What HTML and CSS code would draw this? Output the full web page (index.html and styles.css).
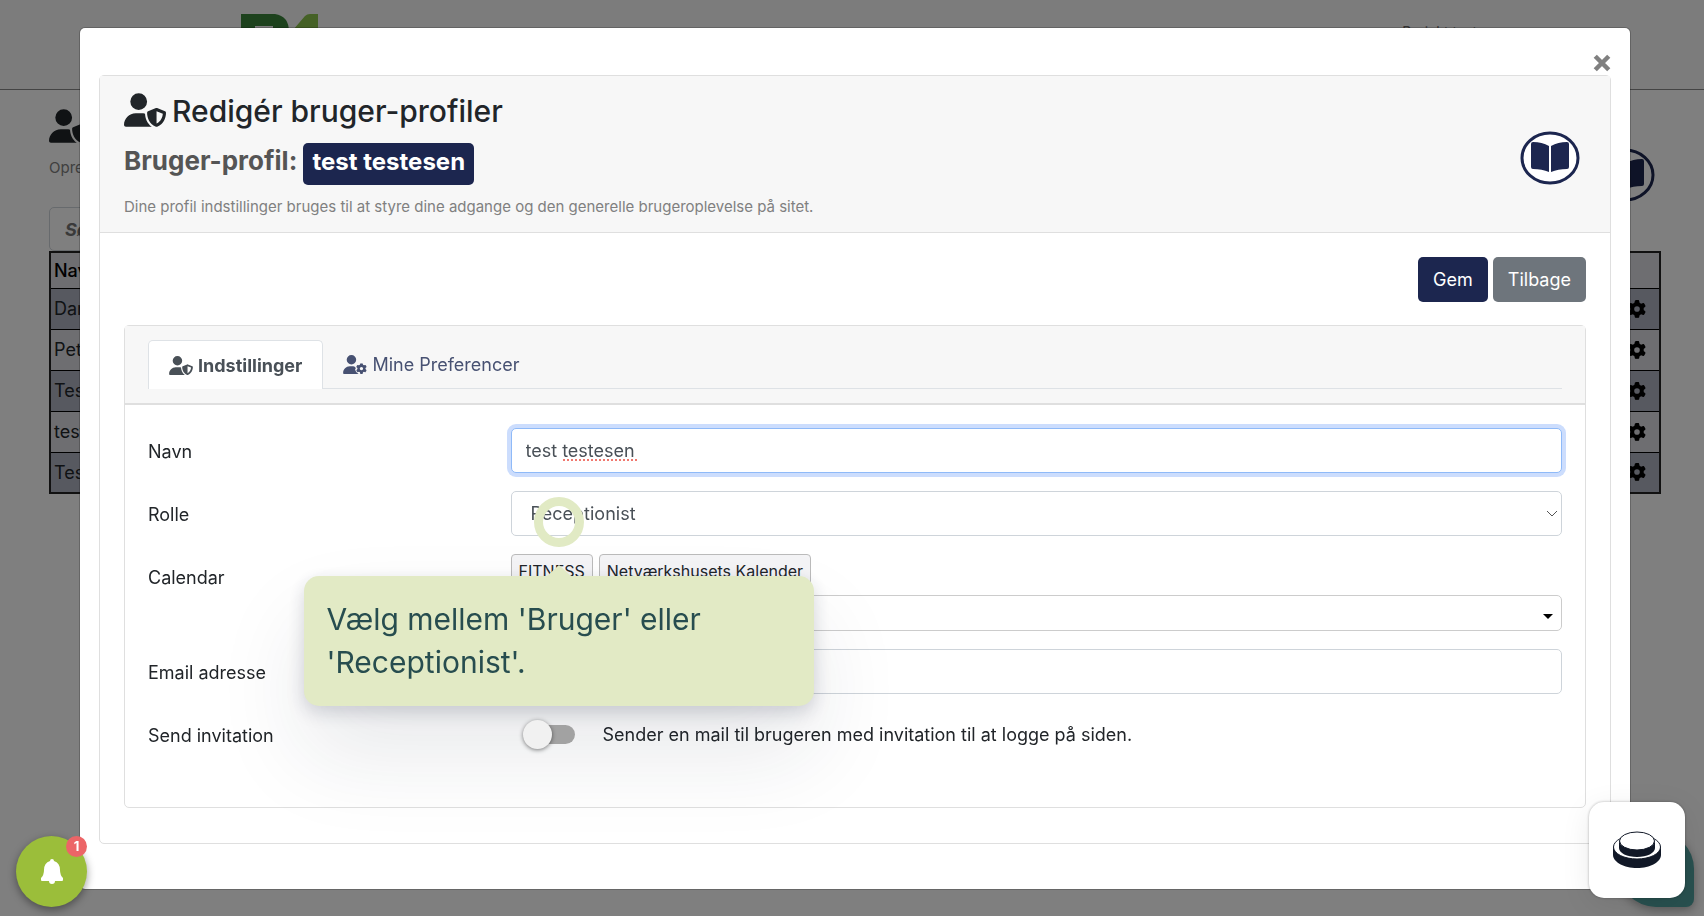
FILE: index.html
```html
<!DOCTYPE html>
<html lang="da">

<head>
    <meta charset="UTF-8">
    <meta name="viewport" content="width=device-width, initial-scale=1.0">
    <title>Redigér bruger-profiler</title>
    <link rel="stylesheet" href="styles.css">
</head>

<body>
    <!-- icons -->
    <svg class="sprite" aria-hidden="true">
        <symbol id="user-shield" viewBox="0 0 640 512">
            <path d="M224 256A128 128 0 1 0 224 0a128 128 0 1 0 0 256zm-45.700 48C79.800 304 0 383.800 0 482.300C0 498.700 13.300 512 29.700 512l388.600 0c1.800 0 3.500-.2 5.300-.5c-76.300-55.100-99.800-141-103.100-200.200c-16.100-4.800-33.100-7.300-50.700-7.300l-91.400 0zm308.800-78.300l-120 48C358 277.400 352 286.200 352 296c0 63.300 25.900 168.800 134.800 214.200c5.900 2.500 12.600 2.500 18.500 0C614.100 464.800 640 359.300 640 296c0-9.800-6-18.600-15.100-22.300l-120-48c-5.700-2.300-12.100-2.300-17.800 0zM591.400 312c-3.900 50.700-27.200 116.700-95.400 149.700l0-187.800L591.400 312z" />
        </symbol>
        <symbol id="gear" viewBox="0 0 512 512">
            <path d="M495.900 166.600c3.200 8.700 .5 18.400-6.400 24.600l-43.300 39.400c1.100 8.300 1.700 16.800 1.700 25.400s-.6 17.100-1.700 25.400l43.300 39.400c6.900 6.200 9.600 15.900 6.400 24.600c-4.400 11.900-9.700 23.300-15.800 34.300l-4.700 8.100c-6.600 11-14 21.400-22.100 31.200c-5.900 7.200-15.700 9.600-24.500 6.800l-55.700-17.700c-13.400 10.300-28.200 18.900-44 25.400l-12.500 57.100c-2 9.100-9 16.300-18.200 17.800c-13.800 2.300-28 3.500-42.500 3.500s-28.700-1.200-42.500-3.500c-9.200-1.500-16.200-8.700-18.200-17.800l-12.500-57.100c-15.800-6.500-30.600-15.100-44-25.400L83.100 425.900c-8.800 2.800-18.600 .3-24.500-6.800c-8.100-9.800-15.500-20.200-22.100-31.200l-4.700-8.100c-6.100-11-11.400-22.400-15.800-34.300c-3.200-8.700-.5-18.400 6.400-24.600l43.300-39.400C64.600 273.100 64 264.600 64 256s.6-17.100 1.700-25.400L22.400 191.200c-6.900-6.200-9.600-15.900-6.400-24.600c4.400-11.900 9.700-23.300 15.800-34.300l4.700-8.100c6.600-11 14-21.400 22.100-31.200c5.900-7.200 15.700-9.600 24.500-6.800l55.700 17.700c13.400-10.300 28.200-18.900 44-25.400l12.500-57.100c2-9.100 9-16.300 18.200-17.800C227.300 1.200 241.500 0 256 0s28.700 1.200 42.500 3.500c9.200 1.500 16.200 8.700 18.200 17.800l12.500 57.100c15.800 6.500 30.600 15.100 44 25.400l55.700-17.700c8.800-2.800 18.600-.3 24.500 6.800c8.100 9.800 15.500 20.200 22.100 31.200l4.700 8.100c6.100 11 11.400 22.400 15.800 34.300zM256 336a80 80 0 1 0 0-160 80 80 0 1 0 0 160z" />
        </symbol>
        <symbol id="user-gear" viewBox="0 0 640 512">
            <path d="M224 256A128 128 0 1 0 224 0a128 128 0 1 0 0 256zm-46 48C80 304 0 384 0 482c0 17 13 30 30 30h388c-18-18-34-30-52-42c-20-24-38-50-44-80l20-32-20-36c-16-11-34-18-52-18z" />
            <use href="#gear" x="348" y="220" width="292" height="292" />
        </symbol>
        <symbol id="book" viewBox="0 0 60 54">
            <ellipse cx="30" cy="27" rx="28" ry="25" fill="#fff" stroke="#1c264f" stroke-width="3" />
            <path d="M11 13q0-2 2-2q9 0 16 4v26q-7-3-16-3q-2 0-2-2zM49 13q0-2-2-2q-9 0-16 4v26q7-3 16-3q2 0 2-2z" fill="#1c264f" />
        </symbol>
    </svg>

    <!-- page behind the modal -->
    <header class="topbar">
        <svg class="logo" viewBox="0 0 150 60" role="img" aria-label="Logo">
            <path d="M0 0h34q14 2 14 18v30H0zM14 12v20h18V12z" fill="#3a843a" />
            <path d="M52 16L64 2q2-2 5-2h8v50H58V16z" fill="#8ac24c" />
        </svg>
        <a class="project" href="#">Projekt test</a>
    </header>
    <main class="page">
        <div class="page-head">
            <div>
                <svg class="head-icon"><use href="#user-shield" /></svg>
                <p class="lead">Opret</p>
            </div>
            <svg class="book"><use href="#book" /></svg>
        </div>
        <input class="search" type="search" placeholder="Søg" aria-label="Søg">
        <table class="users">
            <thead>
                <tr><th>Navn</th><th></th></tr>
            </thead>
            <tbody>
                <tr><td>Dan</td><td><svg class="gear"><use href="#gear" /></svg></td></tr>
                <tr><td>Peter</td><td><svg class="gear"><use href="#gear" /></svg></td></tr>
                <tr><td>Test</td><td><svg class="gear"><use href="#gear" /></svg></td></tr>
                <tr><td>test</td><td><svg class="gear"><use href="#gear" /></svg></td></tr>
                <tr><td>Test</td><td><svg class="gear"><use href="#gear" /></svg></td></tr>
            </tbody>
        </table>
    </main>

    <!-- modal -->
    <div class="backdrop">
        <div class="modal" role="dialog" aria-labelledby="modal-title">
            <div class="modal-top">
                <button class="close" type="button" aria-label="Luk">
                    <svg viewBox="0 0 16 16"><path d="M2 2l12 12M14 2L2 14" /></svg>
                </button>
            </div>
            <div class="card">
                <div class="card-header">
                    <div>
                        <h1 id="modal-title"><svg class="head-icon"><use href="#user-shield" /></svg>Redigér bruger-profiler</h1>
                        <h2>Bruger-profil: <span class="badge">test testesen</span></h2>
                        <p class="lead">Dine profil indstillinger bruges til at styre dine adgange og den generelle brugeroplevelse på sitet.</p>
                    </div>
                    <svg class="book"><use href="#book" /></svg>
                </div>
                <form class="card-body">
                    <div class="actions">
                        <button class="btn btn-primary" type="button">Gem</button>
                        <button class="btn btn-secondary" type="button">Tilbage</button>
                    </div>
                    <div class="panel">
                        <div class="panel-header">
                            <nav class="tabs">
                                <a class="tab active" href="#"><svg><use href="#user-shield" /></svg>Indstillinger</a>
                                <a class="tab" href="#"><svg><use href="#user-gear" /></svg>Mine Preferencer</a>
                            </nav>
                        </div>
                        <div class="fields">
                            <div class="field">
                                <label for="navn">Navn</label>
                                <div class="control">
                                    <input class="input focused" id="navn" type="text" value="test testesen">
                                    <span class="spelling"></span>
                                </div>
                            </div>
                            <div class="field">
                                <label for="rolle">Rolle</label>
                                <div class="control">
                                    <select class="input role" id="rolle">
                                        <option>Receptionist</option>
                                        <option>Bruger</option>
                                    </select>
                                    <svg class="chevron" viewBox="0 0 10 6"><path d="M0 0l5 5 5-5" /></svg>
                                    <span class="ring"></span>
                                    <div class="tooltip" role="tooltip">Vælg mellem 'Bruger' eller 'Receptionist'.</div>
                                </div>
                            </div>
                            <div class="field">
                                <label for="kalender">Calendar</label>
                                <div class="control">
                                    <div class="tags">
                                        <span class="tag">FITNESS</span>
                                        <span class="tag">Netværkshusets Kalender</span>
                                    </div>
                                    <div class="control">
                                        <select class="input calendar" id="kalender"></select>
                                        <span class="caret"></span>
                                    </div>
                                </div>
                            </div>
                            <div class="field">
                                <label for="email">Email adresse</label>
                                <div class="control">
                                    <input class="input" id="email" type="email">
                                </div>
                            </div>
                            <div class="field">
                                <label for="invitation">Send invitation</label>
                                <div class="switch-row">
                                    <input class="switch" id="invitation" type="checkbox">
                                    <span>Sender en mail til brugeren med invitation til at logge på siden.</span>
                                </div>
                            </div>
                        </div>
                    </div>
                </form>
            </div>
        </div>
    </div>

    <!-- floating buttons -->
    <button class="bell" type="button" aria-label="Notifikationer">
        <svg viewBox="0 0 22 25"><path d="M11 0q2 0 2 2q6 2 6 9q0 5 3 8v2q0 1-1 1H14q0 3-3 3t-3-3H1q-1 0-1-1v-2q3-3 3-8q0-7 6-9q0-2 2-2z" /></svg>
        <span class="count">1</span>
    </button>
    <div class="chat"></div>
    <button class="recorder" type="button" aria-label="Optag">
        <svg viewBox="0 0 48 38">
            <path d="M0 16v8c0 7 11 13 24 13s24-6 24-13v-8z" fill="#111827" />
            <ellipse cx="24" cy="16" rx="23.500" ry="12" fill="#fff" stroke="#111827" />
            <path d="M6 10v7c0 5 8 9 18 9s18-4 18-9v-7z" fill="#111827" />
            <ellipse cx="24" cy="10" rx="17.500" ry="9" fill="#fff" stroke="#111827" />
        </svg>
    </button>
</body>

</html>
```
FILE: styles.css
```css
* {
    box-sizing: border-box;
}

body {
    margin: 0;
    height: 100vh;
    overflow: hidden;
    font-family: Inter, "Liberation Sans", sans-serif;
    font-size: 18px;
    line-height: 27px;
    color: #212529;
    background-color: #fff;
}

svg {
    fill: currentColor;
}

h1, h2, p {
    margin: 0;
}

button {
    font: inherit;
    border: 0;
    padding: 0;
    cursor: pointer;
}

.sprite {
    position: absolute;
    width: 0;
    height: 0;
}

/* page behind */
.topbar {
    display: flex;
    justify-content: space-between;
    align-items: flex-start;
    height: 90px;
    padding: 14px 227px 0 241px;
    background-color: #f8f8f8;
    border-bottom: 1px solid #888;
}

.logo {
    width: 150px;
    height: 60px;
}

.project {
    padding-top: 4px;
    font-size: 14px;
    color: #666;
    text-decoration: none;
}

.page {
    padding: 19px 43px 0 49px;
}

.page-head {
    display: flex;
    justify-content: space-between;
    height: 98px;
}

.head-icon {
    width: 42px;
    height: 34px;
    flex: none;
}

.page-head .lead {
    padding-top: 6px;
}

.page-head .book {
    margin: 39px 6px 0 0;
}

.lead {
    font-size: 15px;
    line-height: 24px;
    color: #808080;
}

.search {
    display: block;
    width: 300px;
    height: 44px;
    padding: 0 15px;
    font: italic bold 18px Inter, "Liberation Sans", sans-serif;
    border: 1px solid #ced4da;
    border-radius: 5px;
}

.users {
    width: 100%;
    border-collapse: collapse;
    border: 2px solid #222;
    background-color: #dcdce2;
}

.users th,
.users td {
    height: 41px;
    padding: 0 3px;
    text-align: left;
    border-bottom: 1px solid #000;
}

.users th {
    height: 36px;
    font-weight: 500;
    color: #000;
}

.users tbody tr:nth-child(odd) {
    background-color: #aeb2c0;
}

.users td:last-child {
    width: 40px;
    padding: 0 13px;
    color: #000;
}

.gear {
    display: block;
    width: 18px;
    height: 18px;
}

/* modal */
.backdrop {
    position: fixed;
    inset: 0;
    padding: 28px 74px 0 80px;
    background-color: rgba(0, 0, 0, 0.5);
}

.modal {
    padding: 0 19px 45px;
    border-radius: 5px;
    background-color: #fff;
    box-shadow: 0 0 0 1px rgba(0, 0, 0, 0.2);
}

.modal-top {
    display: flex;
    justify-content: flex-end;
    padding: 26px 0 3px;
}

.close {
    width: 18px;
    height: 18px;
    background: none;
}

.close svg {
    display: block;
    width: 18px;
    stroke: #808080;
    stroke-width: 4px;
}

.card {
    border: 1px solid #dfdfdf;
    border-radius: 5px;
}

.card-header {
    display: flex;
    justify-content: space-between;
    align-items: center;
    padding: 13px 30px 13px 24px;
    background-color: #f7f7f7;
    border-bottom: 1px solid #dfdfdf;
}

h1 {
    display: flex;
    align-items: center;
    gap: 6px;
    font-size: 30px;
    font-weight: 500;
    line-height: 44px;
}

h1 .head-icon {
    margin-bottom: 3px;
}

h2 {
    font-size: 26px;
    font-weight: 700;
    line-height: 56px;
    color: #555;
}

.badge {
    display: inline-block;
    padding: 5px 9px 9px;
    font-size: 24px;
    line-height: 28px;
    color: #fff;
    background-color: #1c264f;
    border-radius: 5px;
}

.card-header .lead {
    padding-top: 6px;
}

.book {
    width: 60px;
    height: 54px;
    flex: none;
}

.card-header .book {
    margin-top: 8px;
}

.card-body {
    padding: 24px 24px 35px;
}

.actions {
    display: flex;
    justify-content: flex-end;
    gap: 5px;
    margin-bottom: 23px;
}

.btn {
    height: 45px;
    padding: 0 15px;
    color: #fff;
    border-radius: 5px;
}

.btn-primary {
    background-color: #1c264f;
}

.btn-secondary {
    background-color: #6e757c;
}

.panel {
    border: 1px solid #dfdfdf;
    border-radius: 5px;
}

.panel-header {
    padding: 14px 23px;
    background-color: #f7f7f7;
    border-bottom: 2px solid #dfdfdf;
}

.tabs {
    display: flex;
    border-bottom: 1px solid #dee2e6;
}

.tab {
    display: flex;
    align-items: center;
    gap: 5px;
    height: 49px;
    margin-bottom: -1px;
    padding: 0 20px;
    color: #475172;
    text-decoration: none;
}

.tab svg {
    width: 24px;
    height: 19px;
}

.tab.active {
    font-weight: 700;
    color: #495057;
    background-color: #fff;
    border: 1px solid #dee2e6;
    border-bottom: 0;
    border-radius: 5px 5px 0 0;
}

/* form fields */
.fields {
    display: grid;
    gap: 18px;
    padding: 23px 23px 50px;
}

.field {
    display: grid;
    grid-template-columns: 1fr 3fr;
    gap: 12px;
}

.field label {
    padding-top: 10px;
}

.control {
    position: relative;
}

.input {
    display: block;
    width: 100%;
    height: 45px;
    padding: 0 14px;
    font: inherit;
    color: #495057;
    background-color: #fff;
    border: 1px solid #ced4da;
    border-radius: 5px;
    outline: 0;
    appearance: none;
}

.input.focused {
    border-color: #8fbaf8;
    box-shadow: 0 0 0 4px #ccddfd;
}

.input.role {
    padding-left: 19px;
}

.input.calendar {
    height: 36px;
    border-color: #ccc;
}

.spelling {
    position: absolute;
    left: 52px;
    top: 31px;
    width: 74px;
    border-bottom: 2px dotted #f0786f;
}

.chevron {
    position: absolute;
    right: 5px;
    top: 20px;
    width: 10px;
    height: 6px;
    overflow: visible;
    fill: none;
    stroke: #555;
}

.caret {
    position: absolute;
    right: 9px;
    top: 19px;
    border: 5px solid transparent;
    border-top-color: #000;
    border-bottom: 0;
}

.tags {
    display: flex;
    gap: 6px;
    margin-bottom: 6px;
}

.tag {
    padding: 0 7px;
    font-size: 16px;
    line-height: 33px;
    background-color: #f4f4f6;
    border: 1px solid #bbb;
    border-radius: 4px;
}

.switch-row {
    display: flex;
    align-items: center;
    gap: 28px;
    height: 45px;
    padding-left: 15px;
}

/* stays above the tooltip shadow */
.switch {
    position: relative;
    z-index: 3;
    width: 49px;
    height: 19px;
    margin: 0;
    background-color: #a2a2a2;
    border-radius: 10px;
    appearance: none;
}

.switch::before {
    content: "";
    position: absolute;
    left: -3px;
    top: -5px;
    width: 29px;
    height: 29px;
    border-radius: 50%;
    background-color: #f1f1f1;
    box-shadow: 0 1px 4px rgba(0, 0, 0, 0.5);
}

/* guide step */
.ring {
    position: absolute;
    z-index: 2;
    left: 23px;
    top: 6px;
    width: 50px;
    height: 50px;
    border: 9px solid #e1eac4;
    border-radius: 50%;
}

.tooltip {
    position: absolute;
    z-index: 2;
    left: -207px;
    top: 85px;
    width: 510px;
    padding: 22px 23px;
    font-size: 30px;
    line-height: 43px;
    color: #274d4f;
    background-color: #e2eac5;
    border-radius: 15px;
    box-shadow: 0 6px 18px rgba(30, 35, 60, 0.18), 0 48px 90px rgba(30, 35, 60, 0.1);
}

.tooltip::before {
    content: "";
    position: absolute;
    left: 242px;
    top: -11px;
    border: 13px solid transparent;
    border-top: 0;
    border-bottom: 12px solid #e2eac5;
}

/* floating buttons */
.bell {
    position: fixed;
    left: 16px;
    bottom: 9px;
    width: 71px;
    height: 71px;
    border-radius: 50%;
    color: #fff;
    background-color: #9bbe3a;
    box-shadow: 0 3px 8px rgba(0, 0, 0, 0.4);
}

.bell svg {
    display: block;
    width: 22px;
    height: 25px;
    margin: 0 auto;
}

.count {
    position: absolute;
    top: 0;
    right: 0;
    width: 21px;
    height: 21px;
    font-size: 13px;
    font-weight: 700;
    line-height: 21px;
    background-color: #ec6567;
    border-radius: 50%;
}

.chat {
    position: fixed;
    right: 10px;
    bottom: 9px;
    width: 76px;
    height: 76px;
    background-color: #28504f;
    border-radius: 50% 50% 8px 50%;
    box-shadow: 0 3px 10px rgba(0, 0, 0, 0.3);
}

.recorder {
    position: fixed;
    right: 19px;
    bottom: 18px;
    width: 96px;
    height: 96px;
    background-color: #fff;
    border-radius: 15px;
    box-shadow: 0 0 3px rgba(0, 0, 0, 0.3), 0 6px 30px rgba(0, 0, 0, 0.08);
}

.recorder svg {
    display: block;
    width: 48px;
    height: 38px;
    margin: 0 auto;
}
```
